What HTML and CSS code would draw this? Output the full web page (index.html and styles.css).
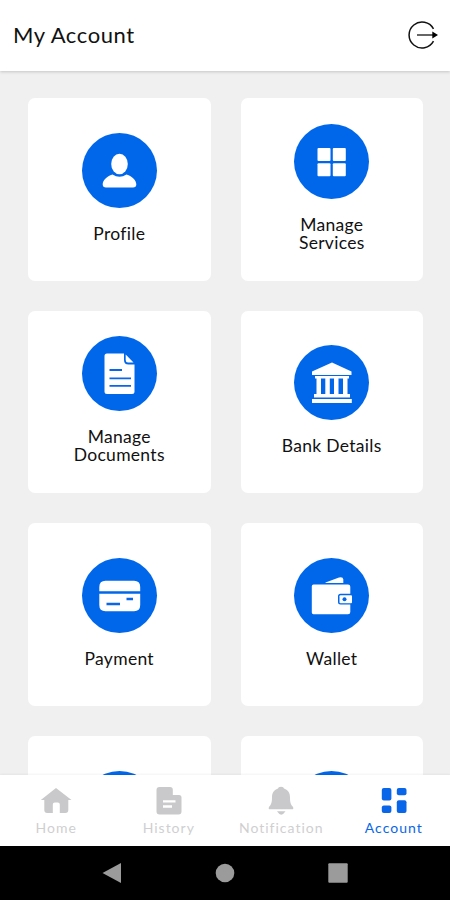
FILE: index.html
```html
<!DOCTYPE html>
<html lang="en">
<head>
  <meta charset="UTF-8" />
  <meta name="viewport" content="width=device-width, initial-scale=1" />
  <title>My Account</title>
  <link rel="stylesheet" href="styles.css">
</head>
<body>
  <div class="app">
    <header class="header">
      <h1>My Account</h1>
      <svg class="logout" width="32" height="30" viewBox="0 0 32 30">
        <path d="M26.5 8.8A13 13 0 1 0 26.5 21.2" fill="none" stroke="#111" stroke-width="1.5" />
        <path d="M10 15H27" stroke="#666" stroke-width="2" />
        <path d="M25.300 11.500L31 15L25.300 18.500Z" fill="#000" />
      </svg>
    </header>

    <main class="grid">
      <div class="card">
        <div class="circle">
          <svg width="75" height="75" viewBox="0 0 75 75" fill="#fff">
            <ellipse cx="37.500" cy="31" rx="8.300" ry="10.300" />
            <path d="M30.500 41.500Q37.500 46 44.500 41.500C50.500 43.500 54.300 47.500 54.300 51.500Q54.300 54.500 51 54.500H24Q20.700 54.500 20.700 51.500C20.700 47.500 24.500 43.500 30.500 41.500Z" />
          </svg>
        </div>
        <span>Profile</span>
      </div>

      <div class="card">
        <div class="circle">
          <svg width="75" height="75" viewBox="0 0 75 75" fill="#fff">
            <rect x="23.500" y="24" width="13" height="13" rx="1" />
            <rect x="38.800" y="24" width="13" height="13" rx="1" />
            <rect x="23.500" y="39.200" width="13" height="13" rx="1" />
            <rect x="38.800" y="39.200" width="13" height="13" rx="1" />
          </svg>
        </div>
        <span>Manage<br>Services</span>
      </div>

      <div class="card">
        <div class="circle">
          <svg width="75" height="75" viewBox="0 0 75 75" fill="#fff">
            <path d="M25 17.500H42V24Q42 28.500 46.500 28.500H52.500V55.500Q52.500 58 50 58H25Q22.500 58 22.500 55.500V20Q22.500 17.500 25 17.500Z" />
            <path d="M43.700 18.500L51.500 26.500H46Q43.700 26.500 43.700 24Z" />
            <path d="M27.500 34H40M27.500 42.300H49M27.500 49.800H49" stroke="#0a66e8" stroke-width="1.800" />
          </svg>
        </div>
        <span>Manage<br>Documents</span>
      </div>

      <div class="card">
        <div class="circle">
          <svg width="75" height="75" viewBox="0 0 75 75" fill="#fff">
            <path d="M38 17.500L57.500 26.500V30H18V26.500Z" />
            <rect x="21" y="31" width="34" height="2.500" />
            <path d="M22.500 33H27V49H22.500ZM31.300 33H35.800V49H31.300ZM40 33H44.500V49H40ZM49 33H53.500V49H49Z" />
            <rect x="20" y="49" width="36" height="3.500" />
            <rect x="18" y="54" width="39.800" height="4" />
          </svg>
        </div>
        <span>Bank Details</span>
      </div>

      <div class="card">
        <div class="circle">
          <svg width="75" height="75" viewBox="0 0 75 75" fill="#fff">
            <path d="M17.300 33.200V29Q17.300 22.800 23.500 22.800H52Q58.200 22.800 58.200 29V33.200Z" />
            <path d="M17.300 35.800H58.200V47Q58.200 53.200 52 53.200H23.500Q17.300 53.200 17.300 47Z" />
            <path d="M24.500 46H38M44.500 41H51" stroke="#0a66e8" stroke-width="2.600" />
          </svg>
        </div>
        <span>Payment</span>
      </div>

      <div class="card">
        <div class="circle">
          <svg width="75" height="75" viewBox="0 0 75 75" fill="#fff">
            <path d="M31.500 24.500L45 19.500Q49 18.500 49.300 21.500V25H31.500Z" />
            <path d="M19.500 26.500H54Q56.300 26.500 56.300 28.800V35.800H46.500Q44 35.800 44 38.300V44Q44 46.500 46.500 46.500H56.300V54Q56.300 56.300 54 56.300H19.500Q17.800 56.300 17.800 54.500V28.300Q17.800 26.500 19.500 26.500Z" />
            <rect x="45.500" y="37.300" width="12.500" height="7.900" rx="1" />
            <circle cx="50.500" cy="41.300" r="2" fill="#0067eb" />
          </svg>
        </div>
        <span>Wallet</span>
      </div>

      <div class="card"><div class="circle"></div></div>
      <div class="card"><div class="circle"></div></div>
    </main>

    <nav class="tabs">
      <a class="tab">
        <svg width="32" height="30" viewBox="0 0 32 30" fill="#c9c9cb">
          <path d="M16 2L31.500 14H28.300V24Q28.300 27 25.300 27H19.800V18.500Q19.800 16.500 17.800 16.500H14.800Q12.800 16.500 12.800 18.500V27H7.300Q4.300 27 4.300 24V14H.8Z" />
        </svg>
        <span>Home</span>
      </a>
      <a class="tab">
        <svg width="32" height="30" viewBox="0 0 32 30" fill="#c9c9cb">
          <path d="M6.500 1H17Q19.800 1 19.800 3.800V9H26Q28.500 9 28.500 11.500V25.500Q28.500 28.500 25.500 28.500H6.500Q3.500 28.500 3.500 25.500V4Q3.500 1 6.500 1Z" />
          <path d="M10 15.300H22.500M10 20.500H19" stroke="#fff" stroke-width="2.300" />
        </svg>
        <span>History</span>
      </a>
      <a class="tab">
        <svg width="32" height="30" viewBox="0 0 32 30" fill="#c9c9cb">
          <path d="M16 .8C18 .8 18.700 1.800 19 2.500C23.500 4 25 7.500 25 11.500C25 16.500 25.800 18.500 28 21Q29 23.300 27 23.300H5Q3 23.300 4 21C6.200 18.500 7 16.500 7 11.500C7 7.500 8.500 4 13 2.500C13.300 1.800 14 .8 16 .8Z" />
          <path d="M12 25.300H20.500Q16.300 32 12 25.300Z" />
        </svg>
        <span>Notification</span>
      </a>
      <a class="tab active">
        <svg width="32" height="30" viewBox="0 0 32 30" fill="#0a66e8">
          <rect x="3.800" y="2" width="9.600" height="12.500" rx="2" />
          <rect x="18.800" y="2" width="9.700" height="7.200" rx="2" />
          <rect x="3.800" y="19.500" width="9.600" height="7.500" rx="2" />
          <rect x="18.800" y="14.300" width="9.700" height="12.700" rx="2" />
        </svg>
        <span>Account</span>
      </a>
    </nav>

    <footer class="system-bar">
      <svg width="20" height="22" viewBox="0 0 20 22"><path d="M.5 11L19 1V21Z" fill="#9b9b9b" /></svg>
      <svg width="20" height="20" viewBox="0 0 20 20"><circle cx="10" cy="10" r="9.300" fill="#9b9b9b" /></svg>
      <svg width="20" height="20" viewBox="0 0 20 20"><rect x=".3" y=".3" width="19.400" height="19.400" rx="1" fill="#9b9b9b" /></svg>
    </footer>
  </div>
</body>
</html>
```

FILE: styles.css
```css
* {
  box-sizing: border-box;
}

body {
  margin: 0;
  font-family: Lato, "Open Sans", sans-serif;
  color: #111;
  background: #f0f0f0;
}

.app {
  display: flex;
  flex-direction: column;
  height: 900px;
  overflow: hidden;
}

.header {
  display: flex;
  justify-content: space-between;
  align-items: center;
  flex: none;
  height: 71px;
  padding: 0 11px 1px 13px;
  background: #fff;
  box-shadow: 0 1px 3px rgba(0, 0, 0, 0.18);
}

h1 {
  margin: 0;
  padding-bottom: 1px;
  font-size: 22px;
  font-weight: 400;
  letter-spacing: 0.6px;
}

.grid {
  flex: 1;
  min-height: 0;
  display: grid;
  grid-template-columns: 182.5px 182.5px;
  grid-auto-rows: 182.5px;
  gap: 30px;
  padding: 27px 27px 0 28px;
  overflow: hidden;
}

.card {
  display: flex;
  flex-direction: column;
  align-items: center;
  justify-content: center;
  padding-bottom: 3px;
  background: #fff;
  border-radius: 7px;
  font-size: 17.5px;
  line-height: 18px;
  letter-spacing: 0.3px;
  text-align: center;
}

.card:nth-child(n+7) {
  justify-content: flex-start;
  padding-top: 35px;
}

.circle {
  width: 75px;
  height: 75px;
  margin-bottom: 17px;
  border-radius: 50%;
  background: #0067eb;
}

.circle svg {
  display: block;
}

.tabs {
  display: flex;
  flex: none;
  height: 71px;
  padding-top: 11px;
  background: #fff;
  box-shadow: 0 -1px 2px rgba(0, 0, 0, 0.05);
}

.tab {
  flex: 1;
  display: flex;
  flex-direction: column;
  align-items: center;
  gap: 3px;
  font-size: 14px;
  line-height: 17px;
  letter-spacing: 1px;
  color: #cfcfd1;
}

.tab.active {
  color: #0a66e8;
}

.system-bar {
  display: flex;
  justify-content: center;
  align-items: center;
  gap: 93px;
  flex: none;
  height: 54px;
  background: #000;
}
```
